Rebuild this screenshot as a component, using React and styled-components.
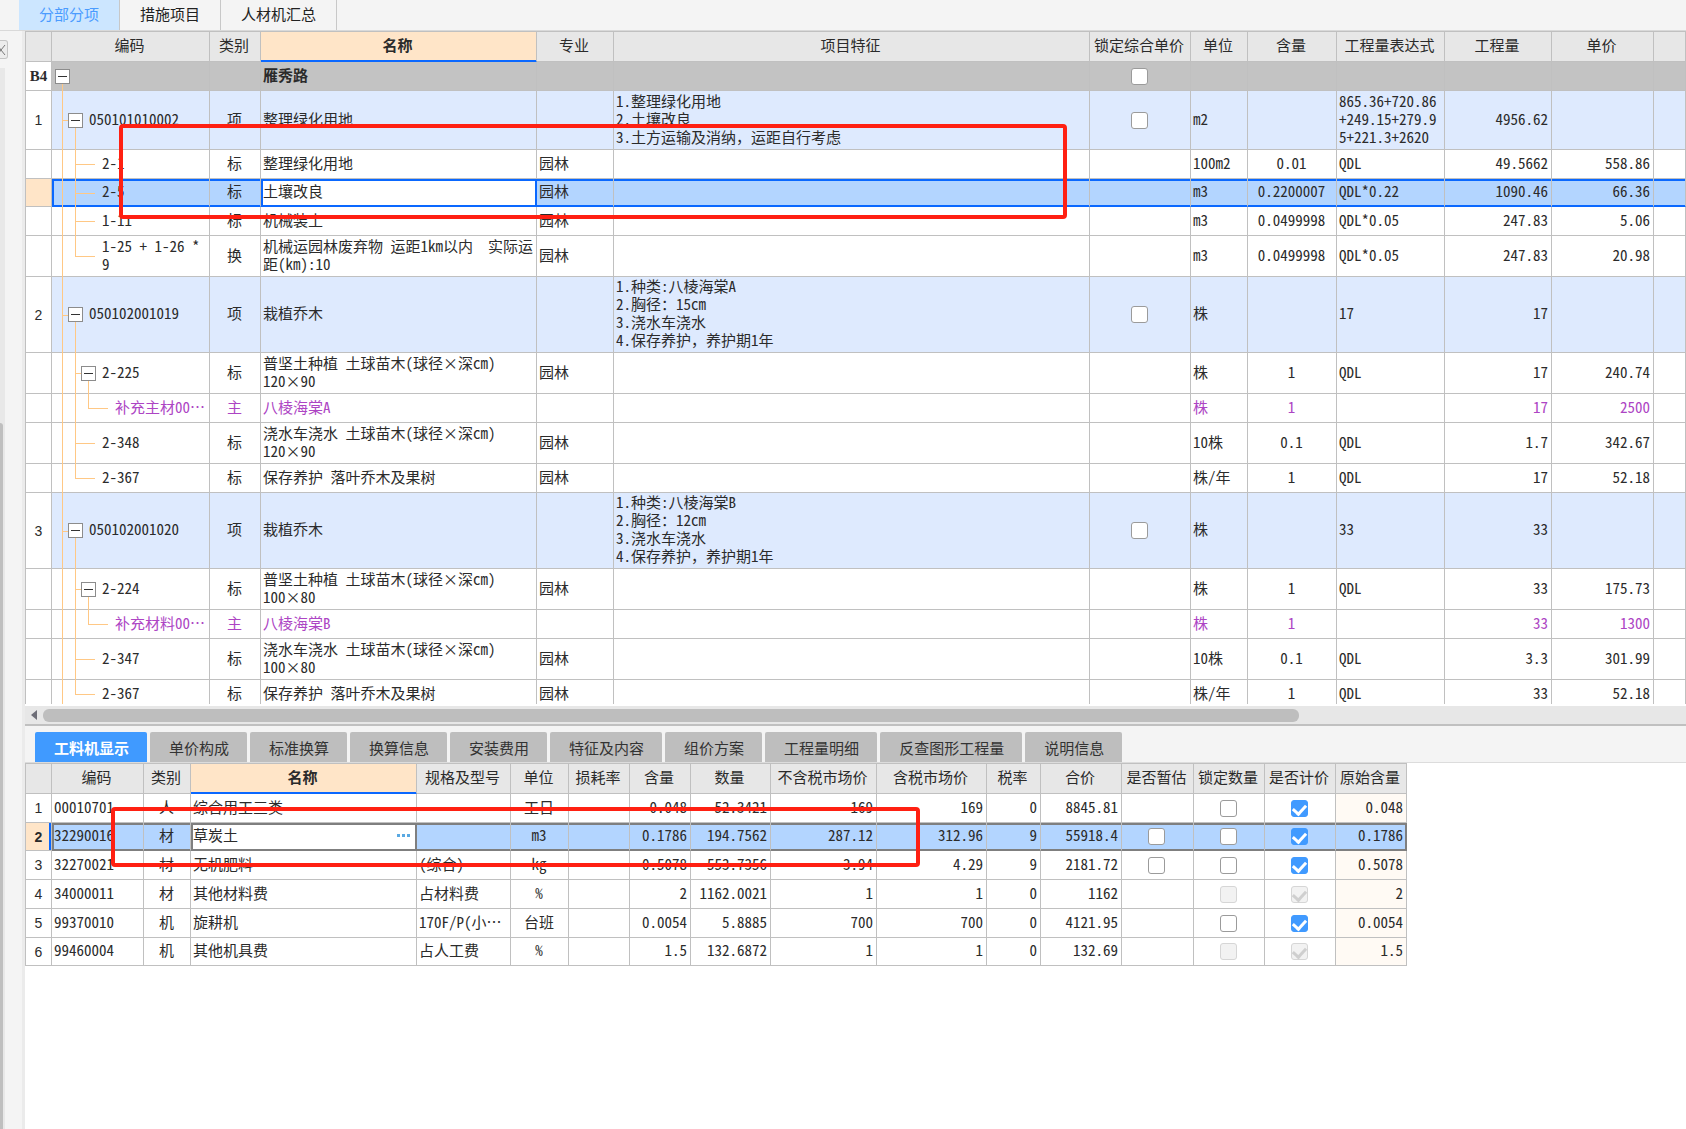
import React from "react";
import styled, { createGlobalStyle, css } from "styled-components";

const topTabs = ["分部分项", "措施项目", "人材机汇总"];

const detailTabs = [
  "工料机显示",
  "单价构成",
  "标准换算",
  "换算信息",
  "安装费用",
  "特征及内容",
  "组价方案",
  "工程量明细",
  "反查图形工程量",
  "说明信息",
];

const itemColumns = [
  { title: "", width: 27 },
  { title: "编码", width: 158 },
  { title: "类别", width: 51, align: "center" },
  { title: "名称", width: 276, current: true },
  { title: "专业", width: 77 },
  { title: "项目特征", width: 476 },
  { title: "锁定综合单价", width: 101, align: "center" },
  { title: "单位", width: 57 },
  { title: "含量", width: 89, align: "center" },
  { title: "工程量表达式", width: 108 },
  { title: "工程量", width: 107, align: "right" },
  { title: "单价", width: 102, align: "right" },
  { title: "" },
];

// tree: one letter per level, v = line, t = tee, l = elbow, h = dash, b = toggle
const items = [
  { no: "B4", kind: "group", height: 29, tree: "b", code: "", cells: ["", "雁秀路", "", "", "box", "", "", "", "", ""] },
  {
    no: "1",
    kind: "item",
    height: 59,
    tree: "tb",
    code: "050101010002",
    cells: [
      "项",
      "整理绿化用地",
      "",
      "1.整理绿化用地\n2.土壤改良\n3.土方运输及消纳，运距自行考虑",
      "box",
      "m2",
      "",
      "865.36+720.86\n+249.15+279.9\n5+221.3+2620",
      "4956.62",
      "",
    ],
  },
  { height: 29, tree: "vth", code: "2-1", cells: ["标", "整理绿化用地", "园林", "", "", "100m2", "0.01", "QDL", "49.5662", "558.86"] },
  { kind: "selected", height: 28, tree: "vth", code: "2-5", cells: ["标", "土壤改良", "园林", "", "", "m3", "0.2200007", "QDL*0.22", "1090.46", "66.36"] },
  { height: 29, tree: "vth", code: "1-11", cells: ["标", "机械装土", "园林", "", "", "m3", "0.0499998", "QDL*0.05", "247.83", "5.06"] },
  {
    height: 41,
    tree: "vlh",
    code: "1-25 + 1-26 *\n9",
    cells: ["换", "机械运园林废弃物 运距1km以内  实际运\n距(km):10", "园林", "", "", "m3", "0.0499998", "QDL*0.05", "247.83", "20.98"],
  },
  {
    no: "2",
    kind: "item",
    height: 76,
    tree: "tb",
    code: "050102001019",
    cells: ["项", "栽植乔木", "", "1.种类:八棱海棠A\n2.胸径：15cm\n3.浇水车浇水\n4.保存养护，养护期1年", "box", "株", "", "17", "17", ""],
  },
  { height: 41, tree: "vtb", code: "2-225", cells: ["标", "普坚土种植 土球苗木(球径×深cm)\n120×90", "园林", "", "", "株", "1", "QDL", "17", "240.74"] },
  { kind: "material", height: 29, tree: "vvlh", code: "补充主材00…", cells: ["主", "八棱海棠A", "", "", "", "株", "1", "", "17", "2500"] },
  { height: 41, tree: "vth", code: "2-348", cells: ["标", "浇水车浇水 土球苗木(球径×深cm)\n120×90", "园林", "", "", "10株", "0.1", "QDL", "1.7", "342.67"] },
  { height: 29, tree: "vlh", code: "2-367", cells: ["标", "保存养护 落叶乔木及果树", "园林", "", "", "株/年", "1", "QDL", "17", "52.18"] },
  {
    no: "3",
    kind: "item",
    height: 76,
    tree: "tb",
    code: "050102001020",
    cells: ["项", "栽植乔木", "", "1.种类:八棱海棠B\n2.胸径：12cm\n3.浇水车浇水\n4.保存养护，养护期1年", "box", "株", "", "33", "33", ""],
  },
  { height: 41, tree: "vtb", code: "2-224", cells: ["标", "普坚土种植 土球苗木(球径×深cm)\n100×80", "园林", "", "", "株", "1", "QDL", "33", "175.73"] },
  { kind: "material", height: 29, tree: "vvlh", code: "补充材料00…", cells: ["主", "八棱海棠B", "", "", "", "株", "1", "", "33", "1300"] },
  { height: 41, tree: "vth", code: "2-347", cells: ["标", "浇水车浇水 土球苗木(球径×深cm)\n100×80", "园林", "", "", "10株", "0.1", "QDL", "3.3", "301.99"] },
  { height: 29, tree: "vlh", code: "2-367", cells: ["标", "保存养护 落叶乔木及果树", "园林", "", "", "株/年", "1", "QDL", "33", "52.18"] },
];

const resourceColumns = [
  { title: "", width: 27 },
  { title: "编码", width: 92 },
  { title: "类别", width: 47, align: "center" },
  { title: "名称", width: 226, current: true },
  { title: "规格及型号", width: 94 },
  { title: "单位", width: 58, align: "center" },
  { title: "损耗率", width: 61, align: "right" },
  { title: "含量", width: 61, align: "right" },
  { title: "数量", width: 80, align: "right" },
  { title: "不含税市场价", width: 106, align: "right" },
  { title: "含税市场价", width: 110, align: "right" },
  { title: "税率", width: 54, align: "right" },
  { title: "合价", width: 81, align: "right" },
  { title: "是否暂估", width: 72, align: "center" },
  { title: "锁定数量", width: 71, align: "center" },
  { title: "是否计价", width: 71, align: "center" },
  { title: "原始含量", width: 71, align: "right", tint: true },
];

const resources = [
  { height: 29, cells: ["00010701", "人", "综合用工三类", "", "工日", "", "0.048", "52.3421", "169", "169", "0", "8845.81", "", "box", "checked", "0.048"] },
  {
    selected: true,
    height: 28,
    cells: ["32290016", "材", "草炭土", "", "m3", "", "0.1786", "194.7562", "287.12", "312.96", "9", "55918.4", "box", "box", "checked", "0.1786"],
  },
  { height: 29, cells: ["32270021", "材", "无机肥料", "(综合)", "kg", "", "0.5078", "553.7356", "3.94", "4.29", "9", "2181.72", "box", "box", "checked", "0.5078"] },
  { height: 29, cells: ["34000011", "材", "其他材料费", "占材料费", "%", "", "2", "1162.0021", "1", "1", "0", "1162", "", "off", "offchecked", "2"] },
  { height: 29, cells: ["99370010", "机", "旋耕机", "170F/P(小…", "台班", "", "0.0054", "5.8885", "700", "700", "0", "4121.95", "", "box", "checked", "0.0054"] },
  { height: 28, cells: ["99460004", "机", "其他机具费", "占人工费", "%", "", "1.5", "132.6872", "1", "1", "0", "132.69", "", "off", "offchecked", "1.5"] },
];

const checkStates = ["box", "checked", "off", "offchecked"];

const CheckCell = ({ state, label }) => (
  <Check
    type="checkbox"
    aria-label={label}
    defaultChecked={state === "checked" || state === "offchecked"}
    disabled={state === "off" || state === "offchecked"}
  />
);

const Columns = ({ columns }) => (
  <colgroup>
    {columns.map((col, i) => (
      <Col key={i} $width={col.width} />
    ))}
  </colgroup>
);

const Heads = ({ columns }) => (
  <thead>
    <tr>
      {columns.map((col, i) => (
        <Head key={i} $current={col.current}>
          {col.title}
        </Head>
      ))}
    </tr>
  </thead>
);

const ItemRow = ({ row }) => {
  const selected = row.kind === "selected";
  return (
    <Row $height={row.height} $kind={row.kind}>
      <RowHead $current={selected} $serif={row.kind === "group"}>
        {row.no}
      </RowHead>
      <TreeTd $selected={selected} $edge="left">
        <Tree>
          {row.tree.split("").map((kind, i) =>
            kind === "b" ? (
              <ToggleSlot key={i}>
                <Toggle type="button" aria-label="折叠" />
              </ToggleSlot>
            ) : (
              <Guide key={i} $kind={kind} />
            )
          )}
          <TreeText>{row.code}</TreeText>
        </Tree>
      </TreeTd>
      {row.cells.map((cell, i) => {
        const col = itemColumns[i + 2];
        const check = checkStates.includes(cell);
        return (
          <Cell key={i} $align={col.align} $check={check} $selected={selected} $editing={selected && col.current}>
            {check ? <CheckCell state={cell} label={col.title} /> : cell}
          </Cell>
        );
      })}
      <Cell $selected={selected} />
    </Row>
  );
};

const ResourceRow = ({ row, no }) => (
  <Row $height={row.height} $kind={row.selected ? "picked" : undefined}>
    <RowHead $current={row.selected} $marked={row.selected}>
      {no}
    </RowHead>
    {row.cells.map((cell, i) => {
      const col = resourceColumns[i + 1];
      const editing = row.selected && col.current;
      const check = checkStates.includes(cell);
      return (
        <Cell
          key={i}
          $align={col.align}
          $check={check}
          $tint={col.tint && !row.selected}
          $selected={row.selected}
          $line="#7f7f7f"
          $editing={editing}
          $edge={i === 0 ? "left" : i === row.cells.length - 1 ? "right" : undefined}
        >
          {editing ? (
            <EditCell>
              {cell}
              <MoreButton type="button" aria-label="更多">
                <svg width="14" height="3" viewBox="0 0 14 3">
                  <path d="M0 0h3v3H0zM5 0h3v3H5zM10 0h3v3h-3z" fill="#5aa9e2" />
                </svg>
              </MoreButton>
            </EditCell>
          ) : check ? (
            <CheckCell state={cell} label={col.title} />
          ) : (
            cell
          )}
        </Cell>
      );
    })}
  </Row>
);

const App = () => {
  return (
    <Page>
      <GlobalStyle />
      <TopBar>
        {topTabs.map((tab, i) => (
          <TopTab key={tab} type="button" $active={i === 0}>
            {tab}
          </TopTab>
        ))}
      </TopBar>
      <Body>
        <SideStrip>
          <CollapseButton type="button" aria-label="收起">
            <svg width="6" height="18" viewBox="0 0 6 18" fill="none" stroke="#7a7a7a">
              <path d="M-2 5l3 4-3 4M5 4L1 9l4 5" />
            </svg>
          </CollapseButton>
          <SideTrack>
            <SideThumb />
          </SideTrack>
        </SideStrip>
        <Main>
          <ItemPane>
            <Table $full>
              <Columns columns={itemColumns} />
              <Heads columns={itemColumns} />
              <tbody>
                {items.map((row, i) => (
                  <ItemRow key={i} row={row} />
                ))}
              </tbody>
            </Table>
          </ItemPane>
          <ScrollBar>
            <svg width="6" height="10" viewBox="0 0 6 10">
              <path d="M6 0v10L0 5z" fill="#6e6e78" />
            </svg>
            <ScrollTrack>
              <ScrollThumb />
            </ScrollTrack>
          </ScrollBar>
          <DetailBar>
            {detailTabs.map((tab, i) => (
              <DetailTab key={tab} type="button" $active={i === 0}>
                {tab}
              </DetailTab>
            ))}
          </DetailBar>
          <Table>
            <Columns columns={resourceColumns} />
            <Heads columns={resourceColumns} />
            <tbody>
              {resources.map((row, i) => (
                <ResourceRow key={i} row={row} no={i + 1} />
              ))}
            </tbody>
          </Table>
        </Main>
      </Body>
      <Marker $left={119} $top={124} $width={948} $height={95} />
      <Marker $left={111} $top={807} $width={809} $height={60} />
    </Page>
  );
};

export default App;

const mono = `"Noto Sans Mono CJK SC", "Noto Sans CJK SC", monospace`;
const line = "#c0c0c0";
const orange = "#ffc885";

const GlobalStyle = createGlobalStyle`
  * {
    box-sizing: border-box;
  }
  body {
    margin: 0;
    background: #fff;
    color: #2b2b2b;
    font-family: "Noto Sans CJK SC", sans-serif;
    font-size: 15px;
  }
  button {
    font: inherit;
    color: inherit;
    padding: 0;
    border: 0;
    cursor: pointer;
  }
`;

const Page = styled.div`
  position: relative;
  display: flex;
  flex-direction: column;
  min-height: 100vh;
  overflow: hidden;
`;

const TopBar = styled.div`
  display: flex;
  height: 31px;
  padding-left: 19px;
  background: #f4f4f4;
  border-bottom: 1px solid #d9d9d9;
`;

const TopTab = styled.button`
  padding: 0 20px 3px;
  border-right: 1px solid #c8c8c8;
  background: ${({ $active }) => ($active ? "#cce6ff" : "transparent")};
  color: ${({ $active }) => ($active ? "#4a9bff" : "#222")};
`;

const Body = styled.div`
  display: flex;
  flex: 1;
`;

const SideStrip = styled.div`
  display: flex;
  flex-direction: column;
  align-items: flex-start;
  flex: 0 0 25px;
  padding-top: 9px;
  background: #f4f4f4;
  border-right: 3px solid #ebebeb;
`;

const CollapseButton = styled.button`
  display: flex;
  width: 8px;
  height: 19px;
  background: #ececec;
  border: 1px solid #c4c4c4;
  border-left: 0;
  border-radius: 0 3px 3px 0;
`;

const SideTrack = styled.div`
  display: flex;
  flex: 1;
  width: 5px;
  margin-top: 9px;
  padding-top: 355px;
  background: #e8e8e8;
`;

const SideThumb = styled.div`
  width: 3px;
  background: #bfbfbf;
  border-radius: 0 3px 0 0;
`;

const Main = styled.main`
  flex: 1;
  min-width: 0;
`;

const ItemPane = styled.div`
  height: 675px;
  overflow: hidden;
  border-bottom: 2px solid #fff;
`;

const Table = styled.table`
  table-layout: fixed;
  width: ${({ $full }) => ($full ? "100%" : "1382px")};
  border-collapse: separate;
  border-spacing: 0;
  border-top: 1px solid ${line};
  font-family: ${mono};
  line-height: 18px;
`;

const Col = styled.col`
  width: ${({ $width }) => ($width ? `${$width}px` : "auto")};
`;

const Head = styled.th`
  height: 30px;
  padding: 0 2px 3px 0;
  background: ${({ $current }) => ($current ? "#ffe5c8" : "#e7e7e7")};
  border-right: 1px solid ${line};
  border-bottom: 1px solid ${line};
  font-weight: ${({ $current }) => ($current ? 700 : 400)};
  white-space: nowrap;
  ${({ $current }) =>
    $current &&
    css`
      border-bottom-color: #0a68ff;
      box-shadow: inset 0 -1px #0a68ff;
    `}
  &:first-child {
    border-left: 1px solid ${line};
  }
`;

const rowColors = {
  group: "#c3c3c3",
  item: "#deeafe",
  selected: "#b3d5ff",
  picked: "#b3d5ff",
};

const Row = styled.tr`
  height: ${({ $height }) => $height}px;
  background: ${({ $kind }) => rowColors[$kind] || "#fff"};
  color: ${({ $kind }) => ($kind === "material" ? "#ad45c4" : "inherit")};
  font-weight: ${({ $kind }) => ($kind === "group" ? 700 : 400)};
`;

const RowHead = styled.th`
  height: inherit;
  padding: 0;
  background: ${({ $current }) => ($current ? "#ffe5c8" : "#fff")};
  border: 1px solid ${line};
  border-top: 0;
  color: #2b2b2b;
  font-family: ${({ $serif }) => ($serif ? `"Liberation Serif", serif` : `"Liberation Sans", sans-serif`)};
  font-size: ${({ $serif }) => ($serif ? 15 : 14)}px;
  font-weight: ${({ $serif, $marked }) => ($serif || $marked ? 700 : 400)};
  ${({ $marked }) => $marked && "box-shadow: inset -2px 0 #0a68ff;"}
`;

const edges = ({ $selected, $line = "#0a68ff", $editing, $edge }) =>
  $selected &&
  css`
    border-bottom-color: ${$line};
    box-shadow: inset 0 2px ${$line}, inset 0 -1px ${$line}
      ${($edge === "left" || $editing) && `, inset 2px 0 ${$line}`}
      ${($edge === "right" || $editing) && `, inset -1px 0 ${$line}`};
    ${($edge === "right" || $editing) && `border-right-color: ${$line};`}
    ${$editing && "background: #fff;"}
  `;

const Cell = styled.td`
  height: inherit;
  padding: ${({ $check }) => ($check ? "0 2px 0 0" : "0 3px 3px 2px")};
  border-right: 1px solid ${line};
  border-bottom: 1px solid ${line};
  background: ${({ $tint }) => ($tint ? "#fffaf4" : "transparent")};
  text-align: ${({ $align }) => $align || "left"};
  vertical-align: middle;
  white-space: pre;
  ${edges}
`;

const TreeTd = styled(Cell)`
  padding: 0;
`;

const Tree = styled.div`
  display: flex;
  align-items: center;
  height: 100%;
  padding-left: 4px;
`;

const TreeText = styled.span`
  margin-left: 7px;
  padding-bottom: 3px;
`;

const Guide = styled.span`
  position: relative;
  align-self: stretch;
  width: 13px;
  &::before {
    content: "";
    position: absolute;
    left: 6px;
    top: 0;
    bottom: ${({ $kind }) => ($kind === "l" ? "50%" : "-1px")};
    width: 1px;
    background: ${({ $kind }) => ($kind === "h" ? "transparent" : orange)};
  }
  &::after {
    content: "";
    position: absolute;
    left: ${({ $kind }) => ($kind === "h" ? 0 : 6)}px;
    right: 0;
    top: 50%;
    height: 1px;
    background: ${({ $kind }) => ($kind === "v" ? "transparent" : orange)};
  }
`;

const ToggleSlot = styled.span`
  position: relative;
  display: flex;
  align-items: center;
  justify-content: center;
  align-self: stretch;
  width: 13px;
  &::before {
    content: "";
    position: absolute;
    left: 6px;
    top: 50%;
    bottom: -1px;
    width: 1px;
    background: ${orange};
  }
`;

const Toggle = styled.button`
  position: relative;
  flex: 0 0 15px;
  height: 15px;
  background: linear-gradient(#333, #333) center / 9px 1px no-repeat #fff;
  border: 1px solid #8c8c8c;
`;

const Check = styled.input`
  appearance: none;
  display: block;
  width: 17px;
  height: 17px;
  margin: 0 auto;
  background: #fff;
  border: 1px solid #9b9b9b;
  border-radius: 3px;
  &:checked {
    background: #409aff;
    border-color: #409aff;
  }
  &:disabled {
    background: #f2f2f2;
    border-color: #d6d6d6;
  }
  &:checked::after {
    content: "";
    display: block;
    width: 6px;
    height: 10px;
    margin: 1px auto 0;
    border: solid #fff;
    border-width: 0 3px 3px 0;
    transform: rotate(42deg);
  }
  &:disabled:checked::after {
    border-color: #cfcfcf;
  }
`;

const EditCell = styled.div`
  display: flex;
  align-items: center;
  justify-content: space-between;
`;

const MoreButton = styled.button`
  display: flex;
  width: 16px;
  background: transparent;
`;

const ScrollBar = styled.div`
  display: flex;
  align-items: center;
  gap: 6px;
  height: 20px;
  padding-left: 6px;
  background: #e7e7e7;
  border-bottom: 2px solid #c0c0c0;
`;

const ScrollTrack = styled.div`
  display: grid;
  grid-template-columns: 13fr 4fr;
  flex: 1;
`;

const ScrollThumb = styled.div`
  height: 13px;
  background: #bebebe;
  border-radius: 6px;
`;

const DetailBar = styled.div`
  display: flex;
  gap: 3px;
  padding: 6px 0 0 10px;
  background: #f4f4f4;
  border-bottom: 1px solid #dcdcdc;
`;

const DetailTab = styled.button`
  height: 30px;
  padding: 0 18px 0 19px;
  background: ${({ $active }) => ($active ? "#409aff" : "#bebebe")};
  border-radius: 2px 2px 0 0;
  color: ${({ $active }) => ($active ? "#fff" : "#333")};
  font-weight: ${({ $active }) => ($active ? 700 : 400)};
`;

// highlight frames drawn over both grids
const Marker = styled.div`
  position: absolute;
  left: ${({ $left }) => $left}px;
  top: ${({ $top }) => $top}px;
  width: ${({ $width }) => $width}px;
  height: ${({ $height }) => $height}px;
  border: 4px solid #ff2012;
  border-radius: 4px;
  pointer-events: none;
`;
